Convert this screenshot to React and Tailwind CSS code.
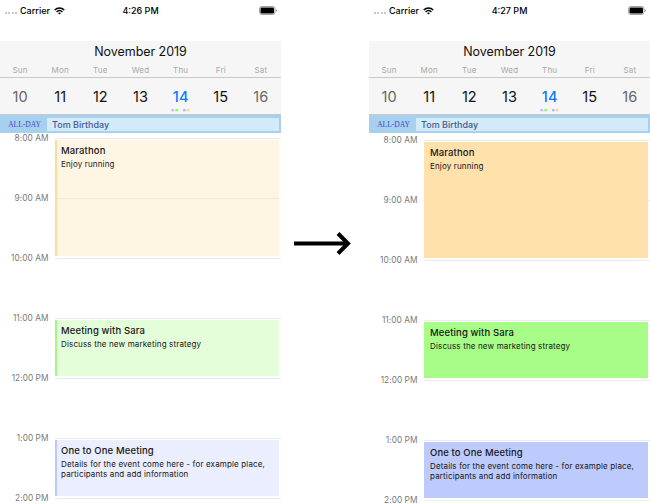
const days = [
  { name: 'Sun', date: 10, tone: 'text-[#666666]' },
  { name: 'Mon', date: 11, tone: 'text-[#111111]' },
  { name: 'Tue', date: 12, tone: 'text-[#111111]' },
  { name: 'Wed', date: 13, tone: 'text-[#111111]' },
  { name: 'Thu', date: 14, tone: 'text-[#0a7aff] font-medium', busy: true },
  { name: 'Fri', date: 15, tone: 'text-[#111111]' },
  { name: 'Sat', date: 16, tone: 'text-[#666666]' },
];

const hours = [
  { label: '8:00 AM', row: 'row-start-1' },
  { label: '9:00 AM', row: 'row-start-2' },
  { label: '10:00 AM', row: 'row-start-3' },
  { label: '11:00 AM', row: 'row-start-4' },
  { label: '12:00 PM', row: 'row-start-5' },
  { label: '1:00 PM', row: 'row-start-6' },
  { label: '2:00 PM', row: 'row-start-7' },
];

const events = [
  {
    title: 'Marathon',
    details: ['Enjoy running'],
    place: 'row-start-1 row-span-2',
    soft: 'bg-[#ffe0a8]/32 border-[#fedb9b]',
    solid: 'bg-[#fee1ab] border-[#fee1ab]',
  },
  {
    title: 'Meeting with Sara',
    details: ['Discuss the new marketing strategy'],
    place: 'row-start-4',
    soft: 'bg-[#a7fd87]/32 border-[#a3f884]',
    solid: 'bg-[#a7fd87] border-[#a7fd87]',
  },
  {
    title: 'One to One Meeting',
    details: ['Details for the event come here - for example place,', 'participants and add information'],
    place: 'row-start-6',
    soft: 'bg-[#bdcafc]/32 border-[#bac8fb]',
    solid: 'bg-[#bdcafc] border-[#bdcafc]',
  },
];

function Wifi() {
  return (
    <svg className="ml-[4px] h-2 w-[11px]" viewBox="0 0 22 16" fill="none" stroke="#000" strokeWidth="3">
      <path d="M1.500 6C7 .6 15 .6 20.500 6" />
      <path d="M5.200 9.700c3.400-3.200 8.200-3.200 11.600 0" />
      <path d="M8 12.200c1.800-1.600 4.200-1.600 6 0l-3 3z" fill="#000" stroke="none" />
    </svg>
  );
}

function StatusBar({ time }) {
  return (
    <div className="grid h-[41px] shrink-0 grid-cols-[1fr_auto_1fr] items-start pt-1">
      <div className="flex h-[13px] items-center pl-[4.500px]">
        <div className="mt-[5px] flex gap-[1.500px]">
          {[0, 1, 2, 3].map((i) => (
            <span key={i} className="size-[2px] rounded-full bg-[#b5b5b5]" />
          ))}
        </div>
        <span className="ml-[3px] text-[9px] leading-[13px] font-medium">Carrier</span>
        <Wifi />
      </div>
      <div className="text-[9px] leading-[13px] font-medium">{time}</div>
      <div className="flex h-[13px] items-center justify-end pr-[4px]">
        <svg className="h-[9px] w-[18px]" viewBox="0 0 18 9">
          <rect x="0.500" y="0.500" width="15.500" height="8" rx="2.300" fill="none" stroke="#a0a0a0" />
          <rect x="1.500" y="1.500" width="13.500" height="6" rx="1.200" fill="#000" />
          <path d="M16.800 3v3q1-.5 1-1.500t-1-1.500" fill="#999" />
        </svg>
      </div>
    </div>
  );
}

function BusyDots() {
  return (
    <svg className="mt-[1px] h-[4px] w-[19px]" viewBox="0 0 19 4">
      <circle cx="1.700" cy="2.200" r="1.400" fill="#b5c6fa" />
      <circle cx="5.700" cy="2.200" r="1.400" fill="#91f76f" />
      <circle cx="9.500" cy="2.200" r="1.400" fill="#f2f3f3" />
      <circle cx="13.300" cy="2.200" r="1.400" fill="#adbef9" />
      <circle cx="17" cy="2.200" r="1.400" fill="#fcd699" />
    </svg>
  );
}

function Phone({ time, solid }) {
  return (
    <div className="flex h-[504px] w-[281px] shrink-0 flex-col overflow-hidden bg-white">
      <StatusBar time={time} />
      <div className="h-[74px] shrink-0 border-b border-[#c8c8c8] bg-[#f6f6f6]">
        <div className="h-[22px] text-center text-[12.500px] leading-[22px] tracking-[-0.05px] text-[#111]">November 2019</div>
        <div className="grid h-[15px] grid-cols-7 border-b border-[#c8c8c8] text-center text-[8px] leading-[15px] tracking-[0.2px] text-[#a8a8a8]">
          {days.map((d) => (
            <span key={d.name}>{d.name}</span>
          ))}
        </div>
        <div className="grid grid-cols-7 text-center">
          {days.map((d) => (
            <div key={d.name} className="flex flex-col items-center pt-[9px]">
              <span className={`text-[14.500px] leading-5 tracking-[0.1px] ${d.tone}`}>{d.date}</span>
              {d.busy && <BusyDots />}
            </div>
          ))}
        </div>
      </div>
      <div className="flex h-[18px] shrink-0 bg-[#a7cfee] pt-[3px] pr-[2px] pb-[2px]">
        <div className="w-[47px] pl-[2px] text-center font-['Liberation_Serif',serif] text-[7.500px] leading-[13px] text-[#3c49cd]">ALL-DAY</div>
        <div className="flex-1 bg-[#d3eaf9] pl-[5px] text-[9px] leading-[13px] font-medium tracking-[0.02px] text-[#45588f]">
          Tom Birthday
        </div>
      </div>
      <div className={`grid auto-rows-[60px] grid-cols-[55px_1fr] ${solid ? 'pt-[7px]' : 'pt-[5px]'}`}>
        {hours.map((h) => (
          <div key={h.label} className={`col-start-1 -mt-[6px] pr-[6.500px] text-right text-[8.300px] leading-[13px] tracking-[0.05px] text-[#7a7a7a] ${h.row}`}>
            {h.label}
          </div>
        ))}
        {hours.map((h) => (
          <div key={h.label} className={`col-start-2 border-t border-[#ebebeb] ${h.row}`} />
        ))}
        {events.map((e) => (
          <div
            key={e.title}
            className={`col-start-2 mt-[2px] mr-[2px] mb-[2px] border-l-2 pt-[3px] pl-[4px] text-[#171717] ${e.place} ${solid ? e.solid : e.soft}`}
          >
            <div className="text-[9.500px] leading-[15px] font-medium tracking-[0.12px]">{e.title}</div>
            <div className="pt-[2px] text-[8px] leading-[9.800px] tracking-[0.15px] whitespace-nowrap">
              {e.details.map((line) => (
                <div key={line}>{line}</div>
              ))}
            </div>
          </div>
        ))}
      </div>
    </div>
  );
}

export default function App() {
  return (
    <main className="flex h-[504px] w-[650px] overflow-hidden bg-white font-['Inter','Liberation_Sans',sans-serif]">
      <Phone time="4:26 PM" />
      <div className="flex w-[88px] shrink-0 items-start justify-center pt-[231px] pr-[2px]">
        <svg className="h-[25px] w-[62px]" viewBox="0 0 62 25" fill="none" stroke="#000" strokeWidth="4">
          <path d="M1 12.500h54" />
          <path d="M45 2.500l10 10-10 10" />
        </svg>
      </div>
      <Phone time="4:27 PM" solid />
    </main>
  );
}
